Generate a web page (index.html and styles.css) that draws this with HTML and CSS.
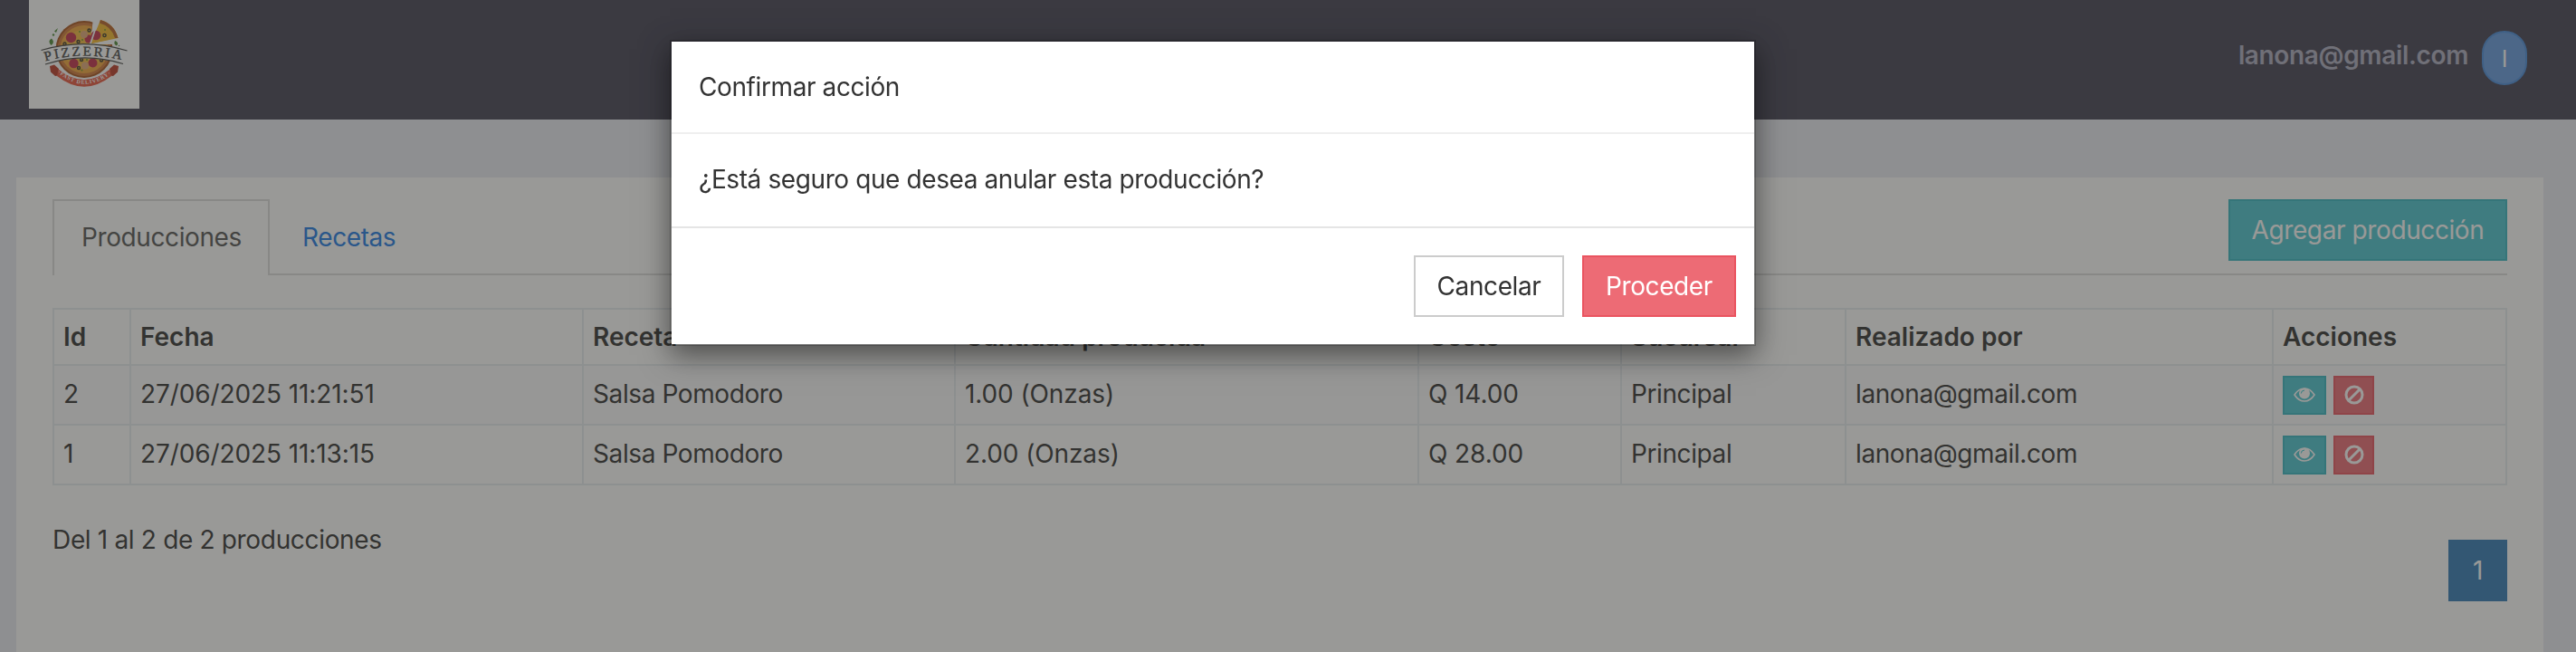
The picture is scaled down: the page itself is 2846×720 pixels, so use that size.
FILE: index.html
```html
<!DOCTYPE html>
<html lang="es">
<head>
<meta charset="utf-8">
<title>Producciones</title>
<link rel="stylesheet" href="styles.css">
</head>
<body>
<svg width="0" height="0" class="defs">
  <symbol id="eye" viewBox="0 0 24 16">
    <path d="M1 8Q5.500 1 12 1T23 8Q18.500 15 12 15T1 8Z" fill="none" stroke="#fff" stroke-width="1.600"/>
    <circle cx="12" cy="6.500" r="6" fill="#fff"/>
    <path d="M8.300 6.500Q8.300 3.200 12 3" fill="none" stroke="#36c6d3" stroke-width="1"/>
  </symbol>
  <symbol id="ban" viewBox="0 0 22 22">
    <circle cx="11" cy="11" r="9" fill="none" stroke="#fff" stroke-width="3"/>
    <path d="M5 17L17 5" stroke="#fff" stroke-width="3"/>
  </symbol>
</svg>
<header class="topbar">
  <div class="logo">
    <svg viewBox="0 0 122 120" width="122" height="120">
      <defs>
        <path id="arc-name" d="M18 67.500Q61 55.500 108 67.500"/>
        <path id="arc-band" d="M31 79.500Q61 106 93 79.500"/>
        <clipPath id="pie"><path d="M0 0H74L67 49H122V120H0Z"/></clipPath>
      </defs>
      <g clip-path="url(#pie)">
        <circle cx="61" cy="54.500" r="31.500" fill="#a8541e"/>
        <circle cx="61" cy="54.500" r="29.500" fill="#d0793a"/>
        <circle cx="61" cy="54.500" r="26.500" fill="#f2a73c"/>
        <circle cx="61" cy="54.500" r="22" fill="#f3b93f"/>
      </g>
      <g fill="#c22f4b">
        <circle cx="46.500" cy="41.500" r="5.700"/><circle cx="66" cy="43" r="4.500"/>
        <circle cx="49.500" cy="70" r="5.200"/><circle cx="70.500" cy="69.500" r="5"/>
      </g>
      <g fill="#e2a879"><circle cx="61" cy="38" r="4"/><circle cx="62" cy="72.500" r="4"/></g>
      <g fill="none" stroke="#3b3a2c" stroke-width="1.400">
        <circle cx="66.500" cy="33.500" r="1.500"/><circle cx="54.500" cy="46" r="1.500"/><circle cx="39.500" cy="48.500" r="1.500"/>
        <circle cx="58" cy="66" r="1.500"/><circle cx="55" cy="75" r="1.500"/><circle cx="80" cy="66.500" r="1.500"/>
      </g>
      <g fill="#6c9a2c"><circle cx="56" cy="35" r="1"/><circle cx="59" cy="44" r="1"/><circle cx="43" cy="64" r="1"/><circle cx="58.500" cy="77.500" r="1"/><circle cx="64" cy="66" r="1"/></g>
      <path d="M68 48.500L79 22Q94 26 98.500 42Z" fill="#f5b92d"/>
      <path d="M79 22Q94 26 98.500 42L95 42Q91 29 78 25.500Z" fill="#b8622b"/>
      <circle cx="74" cy="39" r="5.300" fill="#c22f4b"/>
      <circle cx="83.500" cy="39" r="1.600" fill="none" stroke="#3b3a2c" stroke-width="1.400"/>
      <circle cx="84" cy="33" r=".9" fill="#6c9a2c"/>
      <path d="M67.500 49.500L75 27M68 49.500L98 44" stroke="#fff" stroke-width="1.800"/>
      <g fill="#4e8a38"><path d="M24.500 50Q20 45 25 42.500Q29 47 24.500 50ZM28 34.500L32 31L30 36ZM95 45Q100 47 97 50.500Q93 49 95 45Z"/><circle cx="27" cy="38.500" r="1.200"/><circle cx="99.500" cy="50.500" r=".7"/></g>
      <path d="M14 55.500Q61 42 108.500 55.500L103 70.500Q61 58 18.500 70.500Z" fill="#fff"/>
      <path d="M13.500 55.500Q61 41.500 108.500 56M18 71Q61 57 104 70.500" fill="none" stroke="#444" stroke-width="1.200"/>
      <text class="logo-name"><textPath href="#arc-name">PIZZERIA</textPath></text>
      <path d="M23 73L28 71.500L33 76L32 83.500L29 84L24 79.500ZM99 73L94 71.500L89 76L90 83.500L93 84L98 79.500Z" fill="#bb3a28"/>
      <path d="M32.500 76.500Q61 99.500 89.500 76.500L91 84Q61 107.500 31 84Z" fill="#e9563f"/>
      <text class="logo-tag"><textPath href="#arc-band" startOffset="1">·FAST DELIVERY·</textPath></text>
    </svg>
  </div>
  <div class="user"><span class="email">lanona@gmail.com</span><span class="avatar">I</span></div>
</header>
<main class="panel">
  <div class="tools">
    <nav class="tabs"><a class="tab active">Producciones</a><a class="tab">Recetas</a></nav>
    <button class="btn success add">Agregar producción</button>
  </div>
  <table class="grid">
    <colgroup><col class="c1"><col class="c2"><col class="c3"><col class="c4"><col class="c5"><col class="c6"><col class="c7"><col class="c8"></colgroup>
    <thead><tr><th>Id</th><th>Fecha</th><th>Receta</th><th>Cantidad producida</th><th>Costo</th><th>Sucursal</th><th>Realizado por</th><th>Acciones</th></tr></thead>
    <tbody>
      <tr class="odd"><td class="num">2</td><td class="num">27/06/2025 11:21:51</td><td>Salsa Pomodoro</td><td class="num">1.00 (Onzas)</td><td class="num">Q 14.00</td><td>Principal</td><td>lanona@gmail.com</td>
        <td class="cell-actions"><div class="actions"><button class="mini view"><svg width="24" height="16"><use href="#eye"/></svg></button><button class="mini void"><svg width="22" height="22"><use href="#ban"/></svg></button></div></td></tr>
      <tr><td class="num">1</td><td class="num">27/06/2025 11:13:15</td><td>Salsa Pomodoro</td><td class="num">2.00 (Onzas)</td><td class="num">Q 28.00</td><td>Principal</td><td>lanona@gmail.com</td>
        <td class="cell-actions"><div class="actions"><button class="mini view"><svg width="24" height="16"><use href="#eye"/></svg></button><button class="mini void"><svg width="22" height="22"><use href="#ban"/></svg></button></div></td></tr>
    </tbody>
  </table>
  <div class="summary"><span class="count">Del 1 al 2 de 2 producciones</span><span class="page">1</span></div>
</main>
<div class="overlay">
  <section class="modal" role="dialog">
    <div class="modal-head">Confirmar acción</div>
    <div class="modal-body">¿Está seguro que desea anular esta producción?</div>
    <div class="modal-foot"><button class="btn plain">Cancelar</button><button class="btn danger">Proceder</button></div>
  </section>
</div>
</body>
</html>
```
FILE: styles.css
```css
* { box-sizing: border-box; }
body { margin: 0; height: 720px; overflow: hidden; background: #e8eaf2; color: #333; font: 28px/40px Inter, "Liberation Sans", sans-serif; letter-spacing: -.4px; }
button { font: inherit; letter-spacing: inherit; margin: 0; padding: 0; }
.defs { position: absolute; }
.topbar { height: 132px; padding: 0 54px 0 32px; background: #424053; display: flex; justify-content: space-between; }
.logo { width: 122px; height: 120px; background: #fff; }
.logo svg { display: block; }
.logo-name { font: 15px "Liberation Serif", serif; letter-spacing: 2.600px; fill: #444; stroke: #444; stroke-width: .4px; }
.logo-tag { font: bold 6px "Liberation Serif", serif; letter-spacing: .9px; fill: #fff; }
.user { display: flex; align-items: flex-start; padding-top: 34px; gap: 15px; }
.email { color: #adadc0; font-weight: 600; letter-spacing: -.35px; line-height: 54px; }
.avatar { width: 50px; height: 60px; border: 2px solid #4b8cdb; border-radius: 25px; background: #659be0; color: #fff; font-size: 25px; line-height: 58px; text-align: center; }
.panel { margin: 64px 36px 0 18px; height: 524px; padding: 24px 40px 0; background: #fff; }
.tools { display: flex; height: 84px; margin-bottom: 36px; border-bottom: 2px solid #ddd; justify-content: space-between; }
.tabs { display: flex; height: 84px; gap: 4px; }
.tab { height: 84px; padding: 20px 30px 0; border: 2px solid transparent; border-bottom: 0; color: #217ae5; }
.tab.active { width: 240px; border-color: #ddd; background: #fff; color: #555; }
.btn { height: 68px; border: 2px solid; line-height: 62px; text-align: center; }
.add { width: 308px; }
.success { background: #4bc5d1; border-color: #36b7c3; color: #fff; }
.danger { width: 170px; background: #ed6b75; border-color: #ea5460; color: #fff; }
.plain { width: 166px; background: #fff; border-color: #ccc; color: #333; }
.grid { width: 2712px; table-layout: fixed; border-spacing: 0; border: solid #e7ecf1; border-width: 2px 0 0 2px; }
.c1 { width: 85px; } .c2 { width: 500px; } .c3 { width: 411px; } .c4 { width: 512px; } .c5 { width: 224px; } .c6 { width: 248px; } .c7 { width: 472px; }
th, td { padding: 0 10px; border: solid #e7ecf1; border-width: 0 2px 2px 0; text-align: left; white-space: nowrap; }
th { height: 62px; font-weight: 600; letter-spacing: 0; }
td { height: 66px; padding-bottom: 3px; }
.num { letter-spacing: -.1px; }
.cell-actions { padding-bottom: 0; }
.odd { background: #fbfafd; }
.actions { display: flex; gap: 8px; }
.mini { height: 43px; border: 2px solid; display: flex; align-items: center; justify-content: center; }
.view { width: 48px; background: #4bc5d1; border-color: #36b7c3; }
.void { width: 45px; background: #ed6b75; border-color: #ea5460; }
.summary { display: flex; justify-content: space-between; padding-top: 40px; }
.count { letter-spacing: -.33px; }
.page { width: 65px; height: 68px; margin-top: 20px; background: #337ab7; color: #fff; text-align: center; line-height: 68px; }
.overlay { position: fixed; inset: 0; background: rgba(51, 51, 48, .5); }
.modal { width: 1200px; margin: 44px 0 0 740px; border: 2px solid rgba(0, 0, 0, .2); background: #fff; background-clip: padding-box; box-shadow: 0 10px 30px rgba(0, 0, 0, .5); }
.modal-head { height: 102px; padding: 30px; border-bottom: 2px solid #efefef; }
.modal-body { height: 102px; padding: 30px; }
.modal-foot { height: 130px; padding: 30px 20px 0; border-top: 2px solid #e5e5e5; display: flex; justify-content: flex-end; gap: 20px; }
```
